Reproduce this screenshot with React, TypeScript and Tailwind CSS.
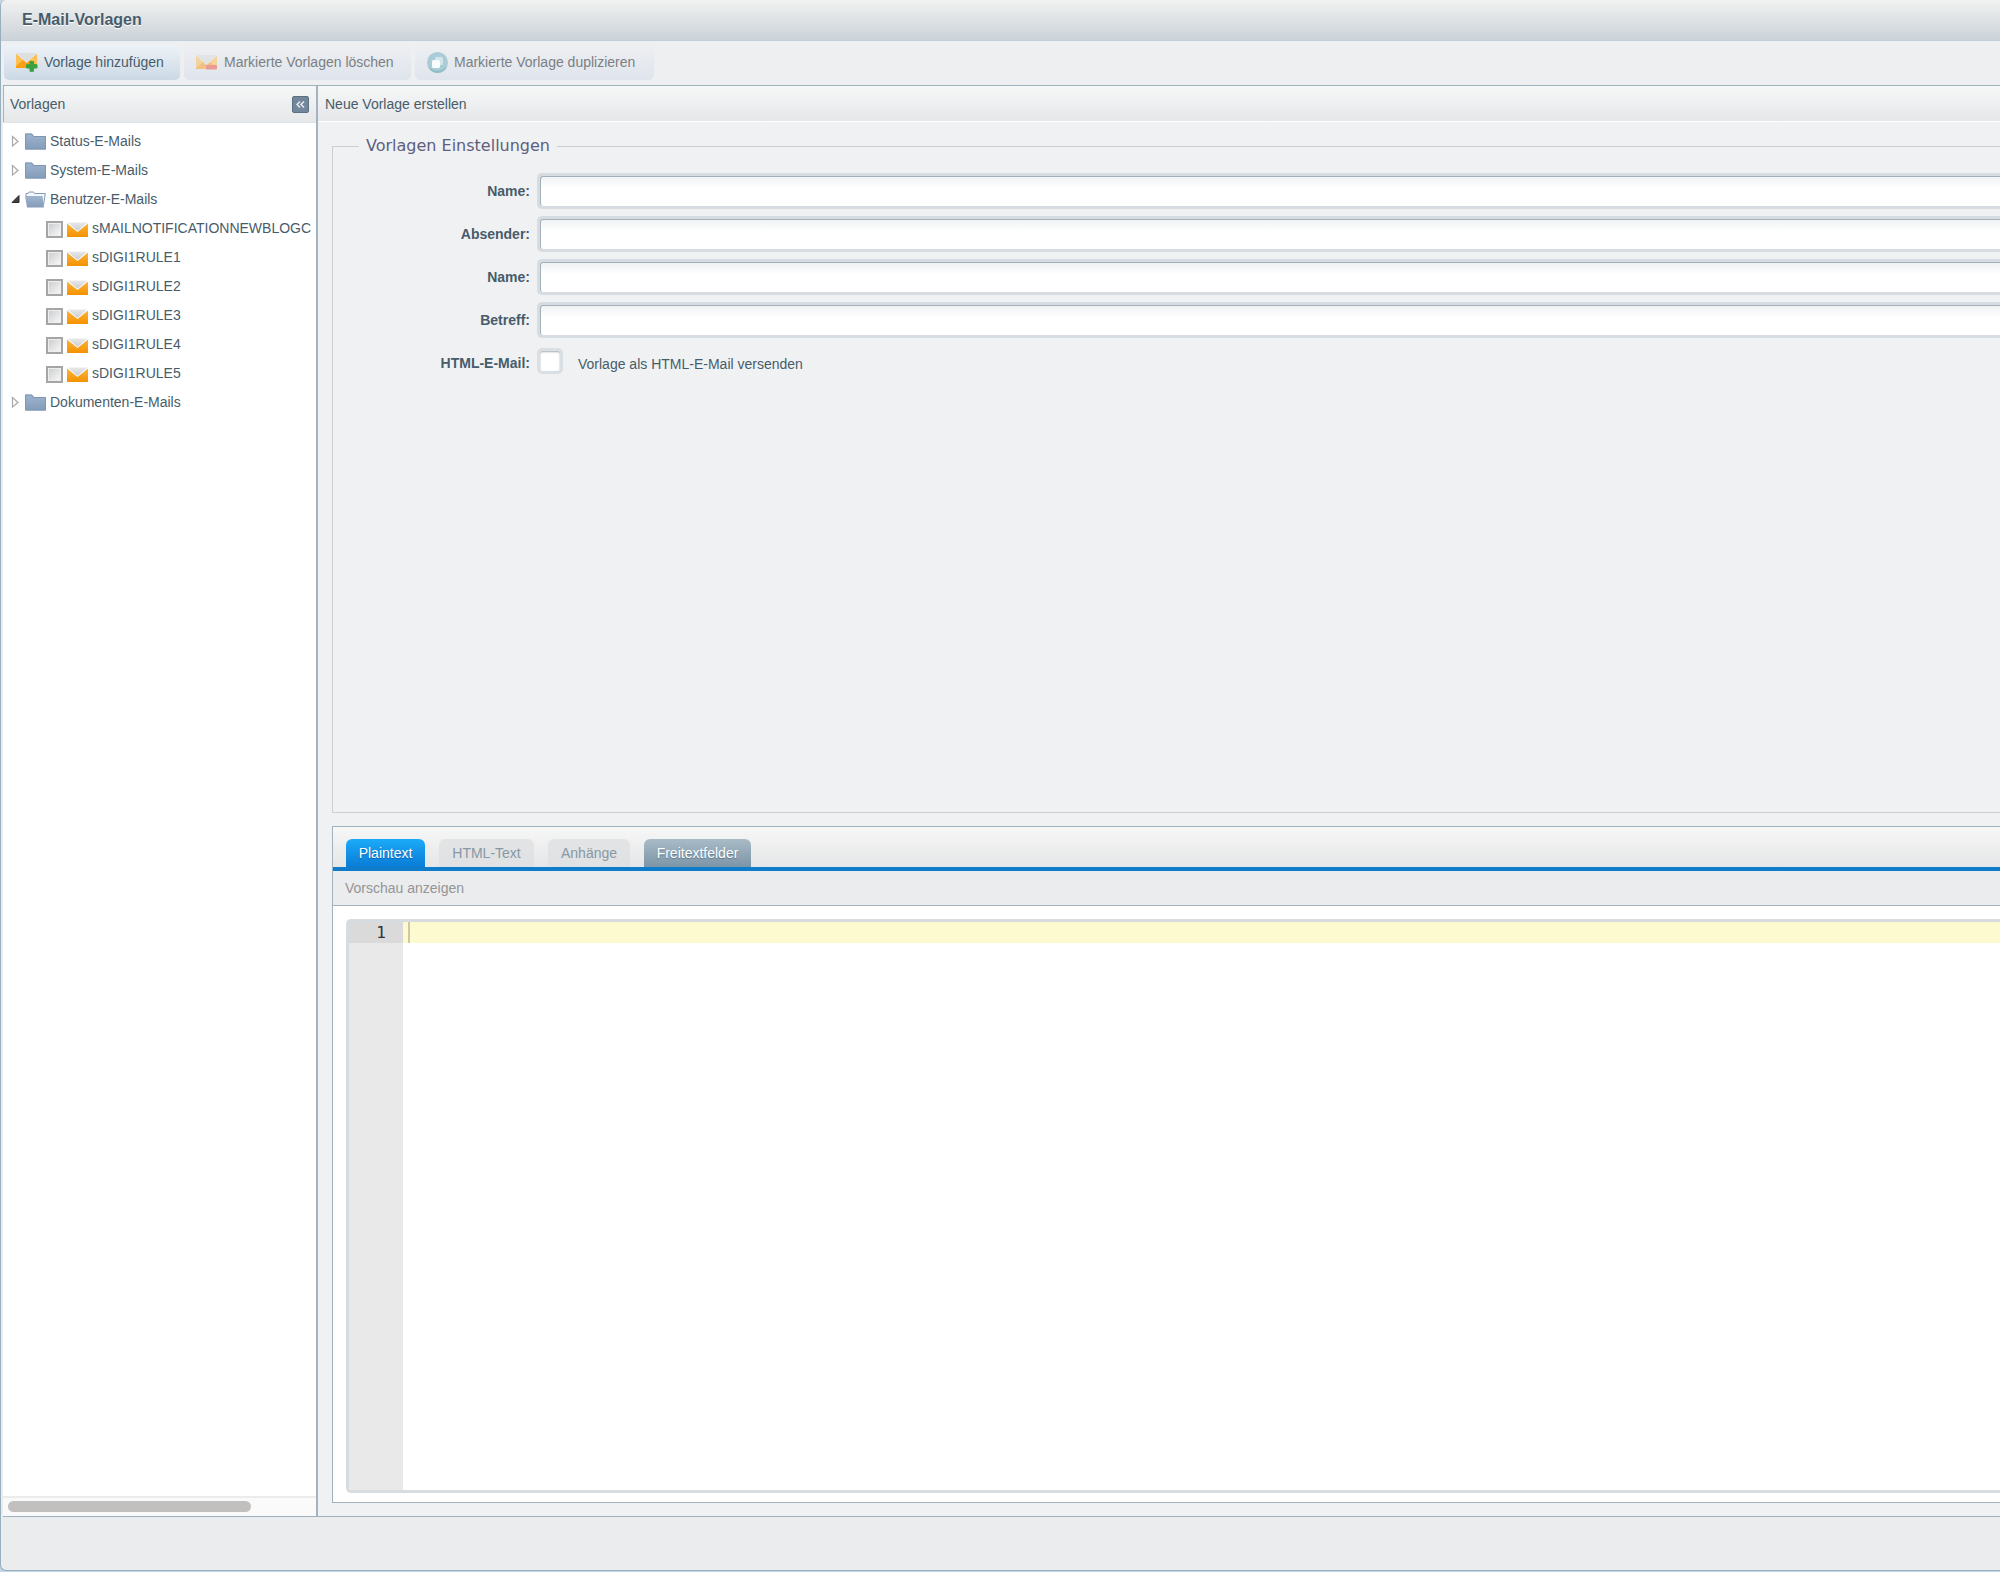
import React, { useState } from 'react';

type IconProps = { className?: string };

const EnvelopeIcon = ({ className = '' }: IconProps) => (
  <svg className={`h-[15px] w-[21px] shrink-0 ${className}`} viewBox="0 0 21 15">
    <defs>
      <linearGradient id="mail" x1="0" y1="0" x2="0" y2="1">
        <stop offset="0" stopColor="#fdb33c" />
        <stop offset="1" stopColor="#f39200" />
      </linearGradient>
      <linearGradient id="flap" x1="0" y1="0" x2="0" y2="1">
        <stop offset="0" stopColor="#e9e9e9" />
        <stop offset="1" stopColor="#c9ccd0" />
      </linearGradient>
    </defs>
    <path d="M0 1.5 L10.5 10 L21 1.5 V15 H0Z" fill="url(#mail)" />
    <path d="M0.5 0.5 H20.5 L10.5 9Z" fill="url(#flap)" />
  </svg>
);

const AddMailIcon = () => (
  <svg className="h-[20px] w-[22px] shrink-0" viewBox="0 0 22 20">
    <path d="M0.5 1 H20.5 L10.5 10Z" fill="#dedede" />
    <path d="M0 2 L10.5 11 L21 2 V16 H0Z" fill="#fb9f14" />
    <path d="M0 2 L7 8 L0 14Z" fill="#fdc052" />
    <path d="M21 2 L14 8 L21 14Z" fill="#fdc052" />
    <path d="M14 9.5 h3.5 v3.2 h3.5 v3.3 h-3.5 v3.3 h-3.5 v-3.3 h-3.5 v-3.3 h3.5Z" fill="#3ba23f" stroke="#3ba23f" strokeLinejoin="round" />
  </svg>
);

const DeleteMailIcon = () => (
  <svg className="h-[20px] w-[22px] shrink-0 opacity-60" viewBox="0 0 22 20">
    <path d="M0.5 3 H20.5 L10.5 12Z" fill="#dedede" />
    <path d="M0 4 L10.5 13 L21 4 V17 H0Z" fill="#fba83a" />
    <path d="M0 4 L7 10 L0 16Z" fill="#fdc668" />
    <path d="M21 4 L14 10 L21 16Z" fill="#fdc668" />
    <rect x="10" y="13" width="11" height="4.5" rx="1" fill="#ee6a58" />
  </svg>
);

const DuplicateIcon = () => (
  <svg className="h-[21px] w-[21px] shrink-0" viewBox="0 0 21 21">
    <circle cx="10.5" cy="10.5" r="10.5" fill="#a9ccd6" />
    <path d="M1 14 a10 10 0 0 0 19 0 a12 12 0 0 1 -19 0Z" fill="#8fbdc9" />
    <rect x="8" y="5" width="8" height="8" rx="1.5" fill="#d3e6eb" />
    <rect x="5" y="8" width="8" height="8" rx="1.5" fill="#f8fcfd" />
  </svg>
);

const FolderIcon = ({ open }: { open?: boolean }) => (
  <svg className="h-[17px] w-[21px] shrink-0" viewBox="0 0 21 17">
    <defs>
      <linearGradient id="folder" x1="0" y1="0" x2="0" y2="1">
        <stop offset="0" stopColor="#9fb4ce" />
        <stop offset="1" stopColor="#839cb9" />
      </linearGradient>
    </defs>
    {open ? (
      <>
        <path d="M1 5 V2.5 H3 L4 1 H8.5 L9.5 2.5 H20.3 L18.5 14" fill="#f3f6fa" stroke="#8199b6" />
        <path d="M0 5 H17.500 L19 16.5 H2Z" fill="url(#folder)" />
      </>
    ) : (
      <>
        <path d="M0 0.5 H7 L9 3 H21 V16.5 H0Z" fill="url(#folder)" />
        <path d="M0.5 16 V1 H6.7 L8.7 3.5 H20.5 V16Z" fill="none" stroke="#7d96b3" />
      </>
    )}
  </svg>
);

const Arrow = ({ open }: { open?: boolean }) => (
  <svg className="h-[13px] w-[9px] shrink-0" viewBox="0 0 9 13">
    {open ? (
      <path d="M8 3.5 V10.500 H1Z" fill="#404040" stroke="#2b2b2b" strokeLinejoin="round" />
    ) : (
      <path d="M1.5 2.5 L7 7.5 L1.5 12Z" fill="#fff" stroke="#a9a9a9" strokeWidth="1.2" />
    )}
  </svg>
);

const Folder = ({ label, open, children }: { label: string; open?: boolean; children?: React.ReactNode }) => (
  <li>
    <button type="button" aria-expanded={!!open} className="flex h-[29px] w-full items-center pl-2">
      <Arrow open={open} />
      <span className="ml-[5px] flex pt-[2px]">
        <FolderIcon open={open} />
      </span>
      <span className="ml-1 whitespace-nowrap">{label}</span>
    </button>
    {children}
  </li>
);

const templates = [
  'sMAILNOTIFICATIONNEWBLOGC',
  'sDIGI1RULE1',
  'sDIGI1RULE2',
  'sDIGI1RULE3',
  'sDIGI1RULE4',
  'sDIGI1RULE5',
];

const Sidebar = () => (
  <aside className="flex w-[315px] shrink-0 flex-col border-r-2 border-[#a2b4c1] bg-white">
    <div className="flex h-[36px] shrink-0 items-center justify-between border-l border-[#a2b4c1] bg-linear-to-b from-[#f6f7f7] to-[#e6e7e9] pl-[6px] pr-[7px]">
      <h2>Vorlagen</h2>
      <button type="button" aria-label="Einklappen" className="flex h-[17px] w-[17px] items-center justify-center rounded-xs border border-[#5b6f82] bg-[#73869a]">
        <svg className="h-[9px] w-[9px]" viewBox="0 0 9 9" fill="none" stroke="#e8edf1" strokeWidth="1.5">
          <path d="M4 1.500 L1 4.500 L4 7.500 M8 1.500 L5 4.500 L8 7.500" />
        </svg>
      </button>
    </div>
    <ul className="min-h-0 flex-1 overflow-hidden border-t border-[#dfe4e8] pt-[3px]">
      <Folder label="Status-E-Mails" />
      <Folder label="System-E-Mails" />
      <Folder label="Benutzer-E-Mails" open>
        <ul>
          {templates.map((name) => (
            <li key={name}>
              <label className="flex h-[29px] items-center pl-[43px]">
                <input
                  type="checkbox"
                  className="mt-[3px] h-[17px] w-[17px] shrink-0 appearance-none border-2 border-[#a5a5a5] bg-linear-to-br from-[#c9cbcd] to-[#fafafa] outline-1 -outline-offset-3 outline-[#eeeeee]"
                />
                <EnvelopeIcon className="ml-1 mt-[3px]" />
                <span className="ml-1 whitespace-nowrap">{name}</span>
              </label>
            </li>
          ))}
        </ul>
      </Folder>
      <Folder label="Dokumenten-E-Mails" />
    </ul>
    <div className="h-5 shrink-0 border-t-2 border-[#ececec] bg-[#fafafa] px-[5px] pt-[3px]">
      <div className="h-[11px] w-[243px] rounded-full bg-[#c1c0bf]" />
    </div>
  </aside>
);

const fields = [
  { id: 'name', label: 'Name:' },
  { id: 'sender', label: 'Absender:' },
  { id: 'senderName', label: 'Name:' },
  { id: 'subject', label: 'Betreff:' },
];

const Settings = () => (
  <fieldset className="min-h-0 flex-1 basis-0 border border-r-0 border-[#c9d0d5] pl-[13px]">
    <legend className="ml-[13px] px-[7px] font-['DejaVu_Sans',sans-serif] text-[16px] leading-[22px] text-[#5d5f7d]">
      Vorlagen Einstellungen
    </legend>
    <div className="flex flex-col gap-[7px] pt-4">
      {fields.map((field) => (
        <div key={field.id} className="flex h-9 items-center">
          <label htmlFor={field.id} className="w-[184px] shrink-0 text-right font-bold">
            {field.label}
          </label>
          <div className="ml-[7px] h-9 flex-1 rounded-l-[5px] border-[3px] border-r-0 border-[#d6dce1]">
            <input
              id={field.id}
              type="text"
              className="block h-full w-full rounded-l-[3px] border-l border-t border-[#a3afb9] bg-linear-to-b from-[#f0f2f3] to-white to-40% px-2 outline-none"
            />
          </div>
        </div>
      ))}
      <div className="flex h-9 items-center">
        <label htmlFor="html" className="w-[184px] shrink-0 text-right font-bold">HTML-E-Mail:</label>
        <input
          id="html"
          type="checkbox"
          className="mb-1 ml-[7px] h-[26px] w-[26px] appearance-none rounded-[5px] border-[3px] border-[#dadfe3] bg-white shadow-[inset_0_1px_2px_#a3afb9]"
        />
        <label htmlFor="html" className="ml-[15px] pt-[2px]">
          Vorlage als HTML-E-Mail versenden
        </label>
      </div>
    </div>
  </fieldset>
);

const tabs = [
  { label: 'Plaintext', style: 'w-[79px] bg-linear-to-b from-[#1cabf9] to-[#0a7bd6] text-white text-shadow-[0_1px_1px_#0560ae]' },
  { label: 'HTML-Text', style: 'w-[95px] bg-linear-to-b from-[#e3e4e5] to-[#dfe1e3] text-[#8798a5]' },
  { label: 'Anhänge', style: 'w-[82px] bg-linear-to-b from-[#e3e4e5] to-[#dfe1e3] text-[#8798a5]' },
  { label: 'Freitextfelder', style: 'w-[107px] bg-linear-to-b from-[#a9bbc7] to-[#7c95a7] text-white text-shadow-[0_1px_1px_#5f7788]' },
];

const Editor = () => {
  const [text, setText] = useState('');
  return (
    <section className="flex min-h-0 flex-1 basis-0 flex-col border border-r-0 border-[#9fb2be] bg-white">
      <div role="tablist" className="flex shrink-0 gap-[14px] border-b-4 border-[#0f7bcb] bg-linear-to-b from-[#f7f7f7] to-[#e5e6e7] pl-[13px] pt-3">
        {tabs.map((tab, i) => (
          <button
            key={tab.label}
            type="button"
            role="tab"
            aria-selected={i === 0}
            className={`h-7 rounded-t-[6px] ${tab.style}`}
          >
            {tab.label}
          </button>
        ))}
      </div>
      <div className="flex h-[35px] shrink-0 items-center border-b border-[#9fb2be] bg-[#ebecee] pl-3">
        <button type="button" className="text-[#939596]">Vorschau anzeigen</button>
      </div>
      <div className="flex min-h-0 flex-1 pb-[9px] pl-[13px] pt-[13px]">
        <div className="flex flex-1 rounded-l-[5px] border-[3px] border-r-0 border-[#d7dce1] font-['DejaVu_Sans_Mono',monospace] text-[16px] leading-[21px]">
          <div className="w-[54px] shrink-0 bg-[#e9e9e9]">
            <div className="bg-[#dadada] pr-[17px] text-right text-[#333333]">1</div>
          </div>
          <div className="flex flex-1 bg-[linear-gradient(#fefad0,#fefad0)] bg-[length:100%_21px] bg-no-repeat pl-[5px]">
            <div className="h-[21px] w-[2px] bg-[#cdc9a6]" />
            <textarea
              aria-label="Plaintext"
              value={text}
              onChange={(e) => setText(e.target.value)}
              className="h-full flex-1 resize-none bg-transparent outline-none"
            />
          </div>
        </div>
      </div>
    </section>
  );
};

const toolButton = 'flex h-9 items-center gap-[6px] rounded-[5px] bg-linear-to-b pl-3 whitespace-nowrap';

const App = () => (
  <div className="h-screen overflow-hidden bg-[#c3d6e6] pb-px font-['Liberation_Sans',Arial,sans-serif] text-[14px] leading-5 text-[#475c6a]">
    <div className="flex h-full flex-col overflow-hidden rounded-l-[6px] border-b border-l border-[#98afbe] bg-[#ebecee]">
      <header className="flex h-[41px] shrink-0 items-center border-b border-[#c2ced8] bg-linear-to-b from-[#f1f2f1] to-[#cbd2d9] pl-[21px]">
        <h1 className="text-[16px] font-bold text-shadow-[0_1px_0_#ffffff]">E-Mail-Vorlagen</h1>
      </header>
      <div className="flex h-11 shrink-0 items-start gap-1 bg-[#eeeff1] pl-[3px] pt-[3px]">
        <button type="button" className={`${toolButton} w-[176px] from-[#eff3f7] to-[#cbd9e6]`}>
          <AddMailIcon />
          Vorlage hinzufügen
        </button>
        <button type="button" disabled className={`${toolButton} w-[227px] from-[#eeeff2] to-[#dfe5ed] text-[#7b7f83]`}>
          <DeleteMailIcon />
          Markierte Vorlagen löschen
        </button>
        <button type="button" disabled className={`${toolButton} w-[239px] from-[#eeeff2] to-[#dfe5ed] text-[#7b7f83]`}>
          <DuplicateIcon />
          Markierte Vorlage duplizieren
        </button>
      </div>
      <div className="ml-[2px] flex min-h-0 flex-1 border-y border-[#9fb2be]">
        <Sidebar />
        <main className="flex min-w-0 flex-1 flex-col bg-[#f0f1f3]">
          <h2 className="flex h-[36px] shrink-0 items-center border-b border-white bg-linear-to-b from-[#f6f7f7] to-[#e6e7e9] pl-[7px]">
            Neue Vorlage erstellen
          </h2>
          <div className="flex min-h-0 flex-1 flex-col gap-[13px] pb-[13px] pl-[14px] pt-[13px]">
            <Settings />
            <Editor />
          </div>
        </main>
      </div>
      <footer className="h-[53px] shrink-0" />
    </div>
  </div>
);

export default App;
